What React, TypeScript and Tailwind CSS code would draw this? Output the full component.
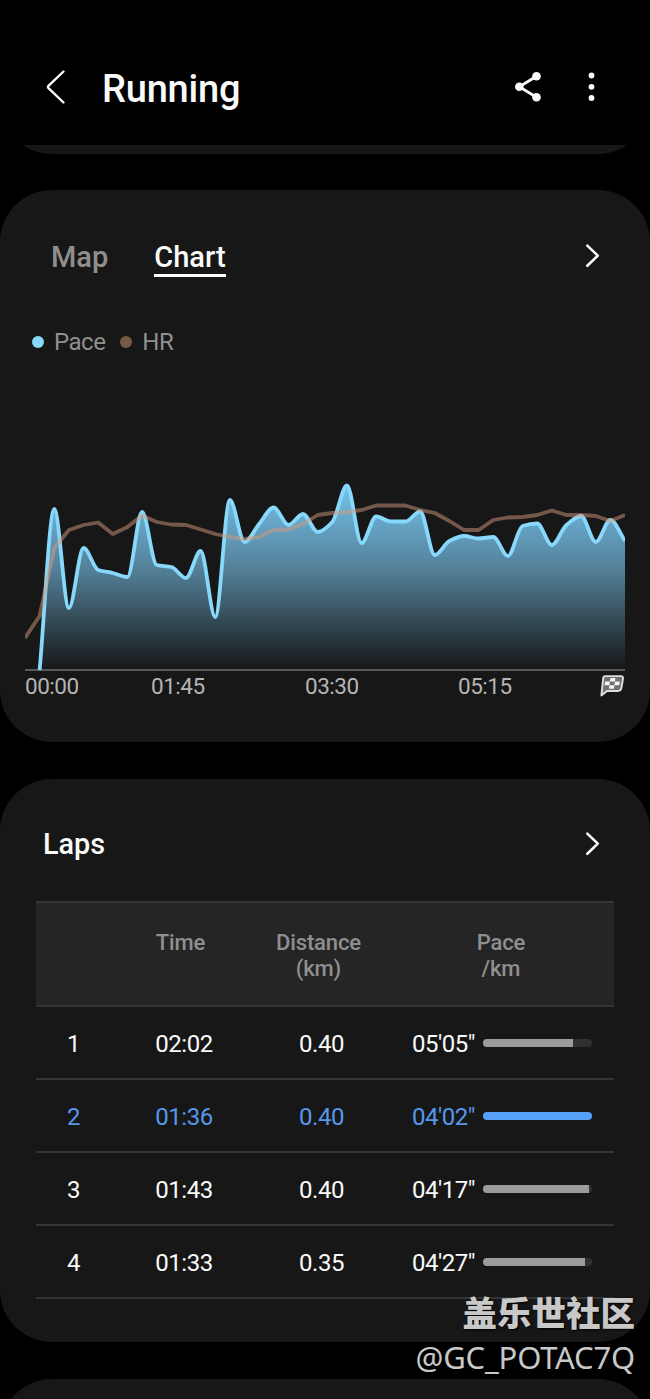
import { useState } from "react";

const PACE = [
  670, 509, 608, 548, 570, 573, 577, 512, 565, 567, 578, 551, 617, 500, 542, 524, 507.5, 525, 514, 532,
  522, 485.5, 543, 516.5, 521.5, 521.5, 511.5, 555, 541, 536, 538.5, 537, 556, 526, 523.5, 545, 525, 516, 542, 520, 541,
];

const HR = [
  638, 616, 548, 530, 525, 522.5, 534, 527, 515.5, 522, 524.5, 525, 529.5, 534, 537, 539, 537, 530, 529.5, 524,
  515, 513, 512, 510, 505.5, 505.5, 505.5, 510, 513, 521, 530, 530, 520, 517.5, 517, 515, 510.5, 515, 515, 516, 521, 515,
];

const TOP = 470;
const BASE = 670;
const STEP = 600 / 41;

type Point = [number, number];

const pacePoints: Point[] = PACE.map((y, i) => [(i + 1) * STEP, y - TOP]);
const hrPoints: Point[] = HR.map((y, i) => [i * STEP, y - TOP]);

// monotone cubic, so peaks never overshoot the samples
function smooth(pts: Point[]) {
  const slope = (i: number) => (pts[i + 1][1] - pts[i][1]) / (pts[i + 1][0] - pts[i][0]);
  const tangent = pts.map((_, i) => {
    if (i === 0) return slope(0);
    if (i === pts.length - 1) return slope(i - 1);
    const a = slope(i - 1);
    const b = slope(i);
    return a * b <= 0 ? 0 : (2 * a * b) / (a + b);
  });
  let d = `M${pts[0][0]},${pts[0][1]}`;
  for (let i = 0; i < pts.length - 1; i++) {
    const [x0, y0] = pts[i];
    const [x1, y1] = pts[i + 1];
    const h = (x1 - x0) / 3;
    d += `C${x0 + h},${y0 + tangent[i] * h} ${x1 - h},${y1 - tangent[i + 1] * h} ${x1},${y1}`;
  }
  return d;
}

const LAPS = [
  { no: 1, time: "02:02", km: "0.40", pace: "05'05\"", pct: 82.5 },
  { no: 2, time: "01:36", km: "0.40", pace: "04'02\"", pct: 100 },
  { no: 3, time: "01:43", km: "0.40", pace: "04'17\"", pct: 97.5 },
  { no: 4, time: "01:33", km: "0.35", pace: "04'27\"", pct: 94 },
];
const FASTEST = 2;

function Chevron() {
  return (
    <svg width="16" height="26" viewBox="0 0 16 26" fill="none" stroke="#fafafa" strokeWidth="2.6" strokeLinecap="round" strokeLinejoin="round">
      <path d="M3.3 2.6 13.8 12.6 3.3 22.8" />
    </svg>
  );
}

function FlagIcon() {
  return (
    <svg width="26" height="24" viewBox="0 0 26 24">
      <path
        d="M6.4 2.1H22Q24.4 2.1 24 4.6L22.4 14.2Q21.9 17 19 17H8L2.4 21.4 4.2 4.2Q4.4 2.1 6.4 2.1Z"
        fill="#707070" stroke="#dedede" strokeWidth="1.9" strokeLinejoin="round"
      />
      <path
        d="M11.4 4h5l-.5 3.6h-5ZM6.1 7.6h4.8l-.5 3.6H5.6ZM15.9 7.6h4.9l-.5 3.6h-4.9ZM10.4 11.2h5l-.5 3.6h-5Z"
        fill="#f4f4f4"
      />
    </svg>
  );
}

function Chart() {
  const line = smooth(pacePoints);
  const hr = "M" + hrPoints.map((p) => p.join(",")).join("L");
  return (
    <svg className="block" width="600" height="202" viewBox="0 0 600 202">
      <defs>
        <linearGradient id="fade" gradientUnits="userSpaceOnUse" x1="0" y1="15" x2="0" y2="200">
          <stop offset="0" stopColor="#77ccf5" stopOpacity="0.96" />
          <stop offset="0.45" stopColor="#77bde3" stopOpacity="0.64" />
          <stop offset="1" stopColor="#70bde0" stopOpacity="0" />
        </linearGradient>
      </defs>
      <path d={`${line}V${BASE - TOP}H${STEP}Z`} fill="url(#fade)" />
      <rect y="199" width="600" height="2" fill="#5a5a5a" />
      <path d={line} fill="none" stroke="#87d8fb" strokeWidth="3.8" strokeLinejoin="round" />
      <path d={hr} fill="none" stroke="#d59a7e" strokeOpacity="0.5" strokeWidth="3.8" strokeLinejoin="round" />
    </svg>
  );
}

export default function App() {
  const [tab, setTab] = useState("Chart");

  return (
    <div className="relative h-[1399px] w-[650px] overflow-hidden bg-black font-['Roboto',sans-serif] text-[#fafafa]">
      {/* Header */}
      <header className="flex h-[145px] items-center pt-[29px] pl-[45px] pr-[49px]">
        <button className="w-[57px]">
          <svg width="22" height="36" viewBox="0 0 22 36" fill="none" stroke="#fafafa" strokeWidth="2.4" strokeLinecap="round" strokeLinejoin="round">
            <path d="M18.5 2.5 3.2 17.2Q2.5 18 3.2 18.8L18.5 33.5" />
          </svg>
        </button>
        <h1 className="pt-1 text-[38px] font-medium leading-[44px] tracking-[-0.2px]">Running</h1>
        <button className="ml-auto">
          <svg width="28" height="32" viewBox="0 0 28 32" fill="#fafafa">
            <path d="M22.5 5.3 5.3 15.8 22.5 26.3" fill="none" stroke="#fafafa" strokeWidth="2.8" />
            <circle cx="22.5" cy="5.3" r="4.3" />
            <circle cx="5.3" cy="15.8" r="4.3" />
            <circle cx="22.5" cy="26.3" r="4.3" />
          </svg>
        </button>
        <button className="ml-[41px]">
          <svg width="18" height="32" viewBox="0 0 18 32" fill="#fafafa">
            <circle cx="8.5" cy="4.5" r="2.9" />
            <circle cx="8.5" cy="15.8" r="2.9" />
            <circle cx="8.5" cy="27" r="2.9" />
          </svg>
        </button>
      </header>

      <div className="flex h-[9px] items-end overflow-hidden">
        <div className="h-[120px] w-full shrink-0 rounded-[52px] bg-[#171717]" />
      </div>

      {/* Chart card */}
      <section className="mt-9 h-[552px] rounded-[52px] bg-[#171717] pt-[50px]">
        <div className="flex h-10 items-start pl-[51px] pr-[50px]">
          {["Map", "Chart"].map((t) => (
            <button
              key={t}
              onClick={() => setTab(t)}
              className={`mr-[46px] h-[37px] border-b-[3px] text-[29px] font-medium leading-[34px] ${
                tab === t ? "border-[#fafafa] text-[#fafafa]" : "border-transparent text-[#8f8f8f]"
              }`}
            >
              {t}
            </button>
          ))}
          <span className="ml-auto mt-[3px]"><Chevron /></span>
        </div>

        <div className="mt-[46px] flex h-8 items-center pl-8 text-2xl tracking-[-0.5px] text-[#8f8f8f]">
          <span className="mr-[10px] h-3 w-3 rounded-full bg-[#87d8fb]" />
          Pace
          <span className="ml-[15px] mr-[10px] h-3 w-3 rounded-full bg-[#795846]" />
          HR
        </div>

        <div className="mt-28 px-[25px]">
          <Chart />
          <div className="flex h-7 items-center text-[22.5px] tracking-[-0.5px] text-[#b5b5b5]">
            <span className="w-[126px] pt-0.5">00:00</span>
            <span className="w-[154px] pt-0.5">01:45</span>
            <span className="w-[153px] pt-0.5">03:30</span>
            <span className="pt-0.5">05:15</span>
            <span className="ml-auto"><FlagIcon /></span>
          </div>
        </div>
      </section>

      {/* Laps card */}
      <section className="mt-[37px] h-[563px] rounded-[52px] bg-[#171717] px-9 pt-[49px]">
        <div className="flex h-[34px] items-center justify-between pl-[7px] pr-[14px]">
          <h2 className="text-[28.8px] font-medium">Laps</h2>
          <span className="mb-0.5"><Chevron /></span>
        </div>

        <div className="mt-[39px] grid h-[106px] grid-cols-[74px_148px_126px_230px] border-y-2 border-[#343434] bg-[#252525] pt-[27px] text-center text-[22px] font-medium leading-[26px] tracking-[-0.15px] text-[#8f8f8f]">
          <span />
          <span className="pr-[7px]">Time</span>
          <span className="pr-[5px]">Distance<br />(km)</span>
          <span className="pl-1">Pace<br />/km</span>
        </div>

        {LAPS.map((lap) => {
          const best = lap.no === FASTEST;
          return (
            <div
              key={lap.no}
              className={`grid h-[73.1px] grid-cols-[74px_148px_126px_230px] items-center border-b-2 border-[#343434] text-center text-2xl tracking-[-0.5px] ${
                best ? "text-[#5598ea]" : "text-[#fafafa]"
              }`}
            >
              <span className="pt-0.5 pl-px">{lap.no}</span>
              <span className="pt-0.5">{lap.time}</span>
              <span className="pt-0.5 pl-px">{lap.km}</span>
              <span className="flex items-center pl-7">
                <span className="w-[71px] whitespace-nowrap pt-0.5 text-left">{lap.pace}</span>
                <span className="h-2 w-[109px] overflow-hidden rounded-full bg-[#303030]">
                  <span
                    className={`block h-full ${best ? "bg-[#57a2f8]" : "bg-[#9c9c9c]"}`}
                    style={{ width: `${lap.pct}%` }}
                  />
                </span>
              </span>
            </div>
          );
        })}
      </section>

      <section className="mt-[37px] h-[120px] rounded-[52px] bg-[#171717]" />

      {/* Watermark */}
      <div className="absolute right-[15px] bottom-[20px] text-right text-[#c8c8c8] [text-shadow:1px_1px_2px_#000]">
        <p className="mb-0.5 font-['Noto_Sans_CJK_SC',sans-serif] text-[34.5px] font-black leading-[44px]">盖乐世社区</p>
        <p className="font-['Noto_Sans',sans-serif] text-[31px] leading-[44px] tracking-[-0.2px]">@GC_POTAC7Q</p>
      </div>
    </div>
  );
}
